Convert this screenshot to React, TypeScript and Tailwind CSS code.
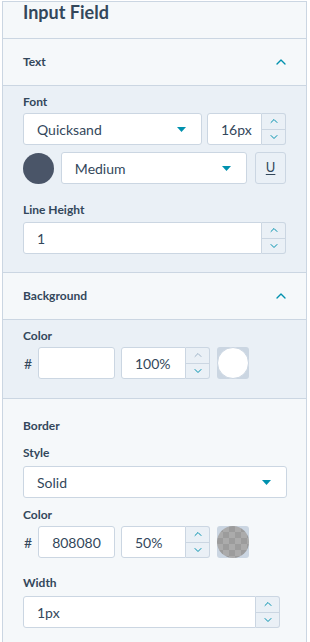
import { ChevronUp, ChevronDown } from "lucide-react";

const FONT = { fontFamily: "Lato, 'Open Sans', sans-serif" };
const LABEL = "text-[12px] font-bold text-[#33475b] leading-none";
const BOX = "h-[32px] rounded-[3px] border border-[#cbd6e2] bg-white text-[14px] text-[#33475b]";

function Caret() {
  return (
    <svg width="9" height="5" viewBox="0 0 9 5" aria-hidden="true">
      <path d="M0 0h9L4.5 5z" fill="#0091ae" />
    </svg>
  );
}

function Select({ value, className }: { value: string; className: string }) {
  return (
    <div className={`${BOX} ${className} flex items-center justify-between pl-[13px] pr-[15px]`}>
      <span>{value}</span>
      <Caret />
    </div>
  );
}

function Stepper({ faded }: { faded?: boolean }) {
  return (
    <div className="flex h-[32px] w-[24px] flex-col rounded-r-[3px] border border-l-0 border-[#cbd6e2] bg-[#eaf0f6]">
      <div className="flex flex-1 items-center justify-center border-b border-[#cbd6e2]">
        <ChevronUp className={faded ? "h-3 w-3 text-[#9fb4c8]" : "h-3 w-3 text-[#0091ae]"} strokeWidth={2} />
      </div>
      <div className="flex flex-1 items-center justify-center">
        <ChevronDown className="h-3 w-3 text-[#0091ae]" strokeWidth={2} />
      </div>
    </div>
  );
}

function NumberInput({ value, className }: { value: string; className: string }) {
  return (
    <div className="flex">
      <div className={`${BOX} ${className} flex items-center rounded-r-none pl-[13px]`}>{value}</div>
      <Stepper />
    </div>
  );
}

function Swatch({ checker }: { checker?: boolean }) {
  return (
    <div className="relative h-[32px] w-[32px] rounded-[3px] bg-[#cbd6e2]">
      <div
        className={
          checker
            ? "absolute inset-0 rounded-full bg-[#a8a8a8] bg-[length:12px_12px] bg-[conic-gradient(#ababab_25%,#9c9c9c_0_50%,#ababab_0_75%,#9c9c9c_0)]"
            : "absolute inset-0 rounded-full border border-[#cbd6e2] bg-white"
        }
      />
    </div>
  );
}

function ColorRow({ hex, alpha, checker }: { hex: string; alpha: string; checker?: boolean }) {
  return (
    <div className="flex items-center">
      <span className="w-[15px] pl-[1px] text-[14px] text-[#33475b]">#</span>
      <div className={`${BOX} flex w-[77px] items-center justify-center`}>{hex}</div>
      <div className="ml-[6px] flex">
        <div className={`${BOX} flex w-[65px] items-center rounded-r-none pl-[13px]`}>{alpha}</div>
        <Stepper faded={!checker} />
      </div>
      <div className="ml-[7px]">
        <Swatch checker={checker} />
      </div>
    </div>
  );
}

function SectionHeader({ title }: { title: string }) {
  return (
    <div className="flex h-[47px] items-center justify-between border-b border-[#cbd6e2] pl-[20px] pr-[17px]">
      <span className={LABEL}>{title}</span>
      <ChevronUp className="h-4 w-4 text-[#0091ae]" strokeWidth={2} />
    </div>
  );
}

export default function App() {
  return (
    <div className="h-[642px] w-[310px] bg-white pt-px" style={FONT}>
      <div className="ml-[2px] h-full w-[305px] overflow-hidden border-x border-t border-[#cbd6e2] bg-[#f5f8fa]">
        <div className="flex h-[37px] items-start border-b border-[#cbd6e2] pl-[20px] pt-px">
          <h1 className="text-[18px] leading-none font-bold text-[#33475b]">Input Field</h1>
        </div>

        <SectionHeader title="Text" />
        <div className="flex flex-col border-b border-[#cbd6e2] bg-[#eaf0f6] px-[20px] pb-[18px] pt-[10px]">
          <span className={LABEL}>Font</span>
          <div className="mt-[5px] flex gap-[5px]">
            <Select value="Quicksand" className="w-[180px]" />
            <NumberInput value="16px" className="w-[55px]" />
          </div>
          <div className="mt-[7px] flex items-center">
            <div className="h-[31px] w-[31px] rounded-full bg-[#4a5568]" />
            <Select value="Medium" className="ml-[7px] w-[187px] pl-[12px]" />
            <div className="ml-[8px] flex h-[32px] w-[31px] items-center justify-center rounded-[3px] border border-[#cbd6e2] bg-[#eaf0f6] text-[13px] text-[#33475b] underline underline-offset-2">
              U
            </div>
          </div>
          <span className={`${LABEL} mt-[20px]`}>Line Height</span>
          <div className="mt-[6px]">
            <NumberInput value="1" className="w-[240px]" />
          </div>
        </div>

        <SectionHeader title="Background" />
        <div className="flex flex-col border-b border-[#cbd6e2] bg-[#eaf0f6] px-[20px] pb-[19px] pt-[10px]">
          <span className={LABEL}>Color</span>
          <div className="mt-[5px]">
            <ColorRow hex="" alpha="100%" />
          </div>
        </div>

        <div className="flex flex-col px-[20px] pt-[21px]">
          <span className={LABEL}>Border</span>
          <span className={`${LABEL} mt-[15px]`}>Style</span>
          <Select value="Solid" className="mt-[7px] w-[264px]" />
          <span className={`${LABEL} mt-[11px]`}>Color</span>
          <div className="mt-[5px]">
            <ColorRow hex="808080" alpha="50%" checker />
          </div>
          <span className={`${LABEL} mt-[19px]`}>Width</span>
          <div className="mt-[7px]">
            <NumberInput value="1px" className="w-[233px]" />
          </div>
        </div>
      </div>
    </div>
  );
}
